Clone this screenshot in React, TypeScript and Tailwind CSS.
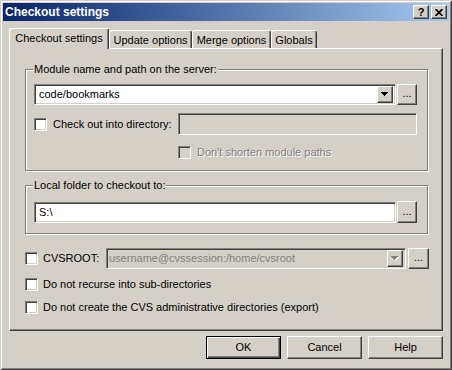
const raised =
  "border border-t-white border-l-white border-r-[#404040] border-b-[#404040] shadow-[inset_-1px_-1px_#808080] bg-[#d4d0c8]";
const sunken =
  "border border-t-[#808080] border-l-[#808080] border-r-white border-b-white shadow-[inset_1px_1px_#404040,inset_-1px_-1px_#d4d0c8]";
const groupBox =
  "relative w-[403px] border border-[#808080] shadow-[inset_1px_1px_#fff,1px_1px_#fff]";

function Check({ disabled }: { disabled?: boolean }) {
  return <div className={`w-[13px] h-[13px] shrink-0 ${sunken} ${disabled ? "bg-[#d4d0c8]" : "bg-white"}`} />;
}

function Arrow({ disabled }: { disabled?: boolean }) {
  return (
    <svg width="8" height="5" viewBox="0 0 8 5" shapeRendering="crispEdges">
      {disabled && <polygon points="1,1 8,1 4.5,5" fill="#fff" />}
      <polygon points="0,0 7,0 3.5,4" fill={disabled ? "#808080" : "#000"} />
    </svg>
  );
}

function DropBtn({ disabled }: { disabled?: boolean }) {
  return (
    <div className={`w-[16px] h-[17px] shrink-0 flex items-center justify-center ${raised}`}>
      <Arrow disabled={disabled} />
    </div>
  );
}

function Dots({ w = "w-[20px]", h = "h-[21px]" }: { w?: string; h?: string }) {
  return (
    <div className={`${w} ${h} shrink-0 flex items-center justify-center pb-[2px] ${raised}`}>...</div>
  );
}

function TitleBtn({ children }: { children: React.ReactNode }) {
  return (
    <div className={`w-[16px] h-[14px] flex items-center justify-center ${raised}`}>{children}</div>
  );
}

export default function App() {
  return (
    <div className="w-[452px] h-[370px] bg-[#d4d0c8] p-[3px] shadow-[inset_1px_1px_#d4d0c8,inset_-1px_-1px_#404040,inset_2px_2px_#fff,inset_-2px_-2px_#808080] font-['Liberation_Sans',Arial,sans-serif] text-[11px] leading-[13px] text-black flex flex-col">
      {/* Title bar */}
      <div className="h-[18px] flex items-center px-[2px] bg-linear-to-r from-[#0a246a] to-[#a6caf0]">
        <span className="text-white font-bold text-[12px] leading-[14px]">Checkout settings</span>
        <div className="ml-auto flex gap-[2px]">
          <TitleBtn>
            <span className="font-bold text-[11px] leading-none">?</span>
          </TitleBtn>
          <TitleBtn>
            <svg width="8" height="7" viewBox="0 0 8 7">
              <path d="M0.5 0 L7.5 7 M7.5 0 L0.5 7" stroke="#000" strokeWidth="1.8" />
            </svg>
          </TitleBtn>
        </div>
      </div>

      <div className="pl-[6px] pt-[7px]">
        {/* Tabs */}
        <div className="flex items-end h-[20px]">
          <div className="w-[100px] h-[21px] -mb-[1px] relative z-10 bg-[#d4d0c8] border-l border-t border-r border-l-white border-t-white border-r-[#404040] shadow-[inset_-1px_0_#808080] rounded-t-[3px] flex items-center justify-center pb-[1px]">
            Checkout settings
          </div>
          <div className="w-[83px] h-[18px] border-l border-t border-r border-l-white border-t-white border-r-[#404040] shadow-[inset_-1px_0_#808080] rounded-t-[3px] flex items-center justify-center pt-[1px]">
            Update options
          </div>
          <div className="w-[79px] h-[18px] border-l border-t border-r border-l-white border-t-white border-r-[#404040] shadow-[inset_-1px_0_#808080] rounded-t-[3px] flex items-center justify-center pt-[1px]">
            Merge options
          </div>
          <div className="w-[46px] h-[18px] border-l border-t border-r border-l-white border-t-white border-r-[#404040] shadow-[inset_-1px_0_#808080] rounded-t-[3px] flex items-center justify-center pt-[1px]">
            Globals
          </div>
        </div>

        {/* Panel */}
        <div className="w-[434px] h-[283px] border border-t-white border-l-white border-r-[#404040] border-b-[#404040] shadow-[inset_-1px_-1px_#808080] flex flex-col pl-[15px] pt-[20px]">
          {/* Module group */}
          <div className={`${groupBox} h-[102px] pl-[8px] pt-[14px]`}>
            <span className="absolute -top-[7px] left-[7px] px-[1px] bg-[#d4d0c8]">Module name and path on the server:</span>
            <div className="flex items-center">
              <div className={`w-[362px] h-[21px] bg-white flex items-center pl-[4px] pr-[2px] ${sunken}`}>
                <span className="flex-1">code/bookmarks</span>
                <DropBtn />
              </div>
              <div className="ml-[1px]">
                <Dots />
              </div>
            </div>
            <div className="mt-[8px] flex items-center h-[22px]">
              <Check />
              <span className="ml-[6px] w-[125px]">Check out into directory:</span>
              <div className={`w-[239px] h-[22px] bg-[#d4d0c8] ${sunken}`} />
            </div>
            <div className="mt-[11px] flex items-center pl-[144px]">
              <Check disabled />
              <span className="ml-[6px] text-[#808080] [text-shadow:1px_1px_0_#fff]">Don't shorten module paths</span>
            </div>
          </div>

          {/* Local folder group */}
          <div className={`${groupBox} mt-[14px] h-[49px] pl-[8px] pt-[15px]`}>
            <span className="absolute -top-[7px] left-[7px] px-[1px] bg-[#d4d0c8]">Local folder to checkout to:</span>
            <div className="flex items-center h-[22px]">
              <div className={`w-[362px] h-[21px] bg-white flex items-center pl-[4px] ${sunken}`}>S:\</div>
              <div className="ml-[1px]">
                <Dots h="h-[22px]" />
              </div>
            </div>
          </div>

          {/* CVSROOT */}
          <div className="mt-[14px] flex items-center h-[21px]">
            <Check />
            <span className="ml-[5px] w-[63px]">CVSROOT:</span>
            <div className={`w-[300px] h-[21px] bg-[#d4d0c8] flex items-center pl-[2px] pr-[2px] ${sunken}`}>
              <span className="flex-1 text-[#808080]">username@cvssession:/home/cvsroot</span>
              <DropBtn disabled />
            </div>
            <div className="ml-[2px]">
              <Dots w="w-[21px]" />
            </div>
          </div>

          <div className="mt-[9px] flex items-center h-[13px]">
            <Check />
            <span className="ml-[5px]">Do not recurse into sub-directories</span>
          </div>
          <div className="mt-[10px] flex items-center h-[13px]">
            <Check />
            <span className="ml-[5px]">Do not create the CVS administrative directories (export)</span>
          </div>
        </div>

        {/* Buttons */}
        <div className="mt-[5px] w-[434px] flex justify-end gap-[6px]">
          <div className="w-[75px] h-[23px] bg-[#d4d0c8] border border-black shadow-[inset_1px_1px_#fff,inset_-1px_-1px_#404040,inset_-2px_-2px_#808080] flex items-center justify-center">
            OK
          </div>
          <div className={`w-[75px] h-[23px] flex items-center justify-center ${raised}`}>Cancel</div>
          <div className={`w-[75px] h-[23px] flex items-center justify-center ${raised}`}>Help</div>
        </div>
      </div>
    </div>
  );
}
